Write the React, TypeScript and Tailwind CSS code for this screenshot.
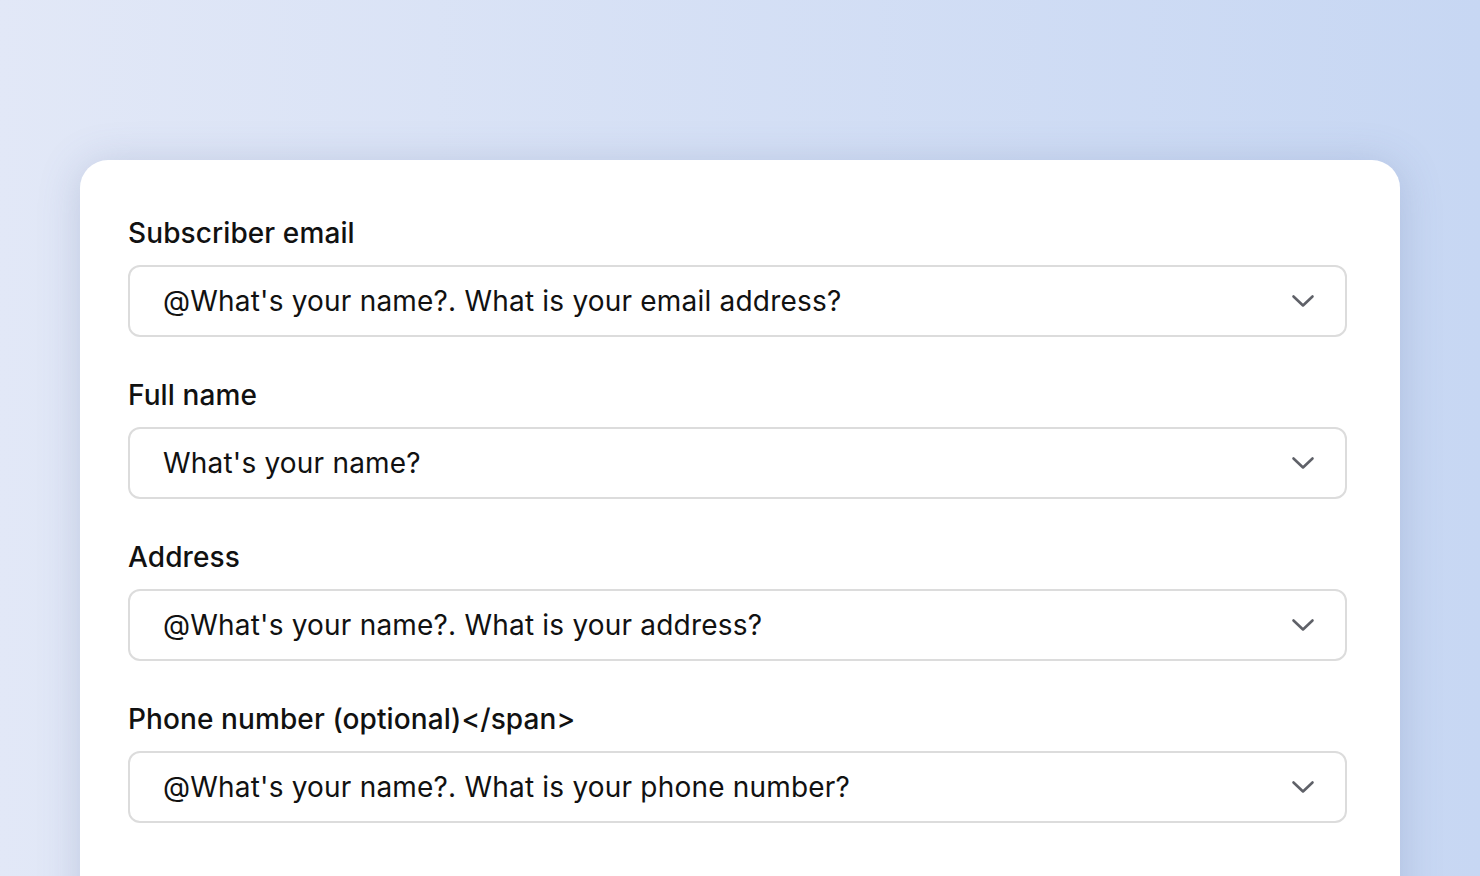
import React from "react";

const fields = [
  { label: "Subscriber email", value: "@What's your name?. What is your email address?" },
  { label: "Full name", value: "What's your name?" },
  { label: "Address", value: "@What's your name?. What is your address?" },
  { label: "Phone number (optional)</span>", value: "@What's your name?. What is your phone number?" },
];

function Chevron() {
  return (
    <svg width="24" height="14" viewBox="0 0 24 14" fill="none" stroke="#5f6168" strokeWidth="2.6" strokeLinecap="round" strokeLinejoin="round">
      <path d="M2.5 2.5 12 11.5l9.5-9" />
    </svg>
  );
}

export default function App() {
  return (
    <div
      className="h-[876px] w-[1480px] overflow-hidden bg-gradient-to-r from-[#e2e8f7] to-[#c7d7f3] pt-[160px] px-[80px]"
      style={{ fontFamily: "Inter, 'Noto Sans', sans-serif" }}
    >
      <div className="h-[800px] rounded-[28px] bg-white pt-[57px] pl-[48px] pr-[53px] shadow-[0_4px_40px_rgba(90,110,160,0.25)]">
        <div className="flex flex-col gap-[42px]">
          {fields.map((f) => (
            <div key={f.label} className="flex flex-col gap-[16px]">
              <div className="text-[28px] font-medium leading-[32px] tracking-[0.1px] text-[#111111]">{f.label}</div>
              <div className="flex h-[72px] items-center justify-between rounded-[12px] border-2 border-[#dcdcdc] pl-[33px] pr-[30px]">
                <span className="text-[28px] tracking-[0.2px] text-[#111111]">{f.value}</span>
                <Chevron />
              </div>
            </div>
          ))}
        </div>
      </div>
    </div>
  );
}
